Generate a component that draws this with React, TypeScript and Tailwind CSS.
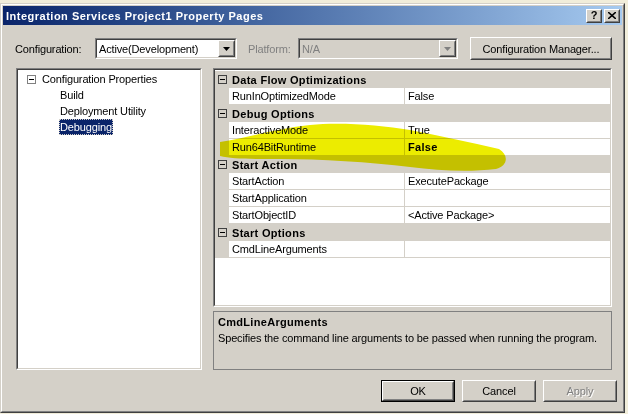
import React from "react";

const FONT = "font-['Liberation_Sans',Arial,sans-serif]";

function MinusBox({ tone = "#808080" }: { tone?: string }) {
  return (
    <span
      className="relative inline-block w-[9px] h-[9px] border bg-transparent shrink-0"
      style={{ borderColor: tone }}
    >
      <span className="absolute left-[1px] top-[3px] w-[5px] h-px bg-black" />
    </span>
  );
}

function Raised({ children, className = "", disabled = false }: { children?: React.ReactNode; className?: string; disabled?: boolean }) {
  return (
    <div className={`border border-t-white border-l-white border-b-[#404040] border-r-[#404040] bg-[#d4d0c8] ${className}`}>
      <div className={`w-full h-full border border-t-[#d4d0c8] border-l-[#d4d0c8] border-b-[#808080] border-r-[#808080] flex items-center justify-center ${disabled ? "text-[#808080] [text-shadow:1px_1px_0_#fff]" : "text-black"}`}>
        {children}
      </div>
    </div>
  );
}

function Sunken({ children, className = "", inner = "bg-white" }: { children?: React.ReactNode; className?: string; inner?: string }) {
  return (
    <div className={`border border-t-[#808080] border-l-[#808080] border-b-white border-r-white ${className}`}>
      <div className={`w-full h-full border border-t-[#404040] border-l-[#404040] border-b-[#d4d0c8] border-r-[#d4d0c8] ${inner} overflow-hidden`}>
        {children}
      </div>
    </div>
  );
}

function Arrow({ color = "#000" }: { color?: string }) {
  return (
    <svg width="7" height="4" viewBox="0 0 7 4">
      <path d="M0 0H7L3.5 4Z" fill={color} />
    </svg>
  );
}

function Combo({ value, width, disabled = false }: { value: string; width: string; disabled?: boolean }) {
  return (
    <Sunken className={`${width} h-[21px]`} inner={disabled ? "bg-[#d4d0c8]" : "bg-white"}>
      <div className="flex h-full">
        <div className={`flex-1 flex items-center pl-[2px] ${disabled ? "text-[#808080]" : "text-black"}`}>{value}</div>
        <Raised className="w-[17px] h-full">
          <Arrow color={disabled ? "#808080" : "#000"} />
        </Raised>
      </div>
    </Sunken>
  );
}

function Category({ name }: { name: string }) {
  return (
    <div className="flex h-[17px] items-center bg-[#d4d0c8]">
      <div className="w-[14px] flex justify-center">
        <MinusBox tone="#404040" />
      </div>
      <div className="pl-[3px] font-bold tracking-[0.3px]">{name}</div>
    </div>
  );
}

function Prop({ name, value, bold = false }: { name: string; value: string; bold?: boolean }) {
  return (
    <div className="flex h-[17px]">
      <div className="w-[14px] bg-[#d4d0c8]" />
      <div className="w-[176px] bg-white border-b border-r border-[#d4d0c8] flex items-center pl-[3px]">{name}</div>
      <div className={`flex-1 bg-white border-b border-[#d4d0c8] flex items-center pl-[3px] ${bold ? "font-bold tracking-[0.3px]" : ""}`}>{value}</div>
    </div>
  );
}

export default function App() {
  return (
    <div className={`relative w-[628px] h-[414px] bg-[#f1edda] overflow-hidden pt-[3px] text-[11px] leading-[14px] tracking-[-0.15px] text-black ${FONT}`}>
      {/* window */}
      <div className="w-[625px] h-[410px] border border-t-[#d4d0c8] border-l-[#d4d0c8] border-b-[#404040] border-r-[#404040]">
        <div className="w-full h-full border border-t-white border-l-white border-b-[#808080] border-r-[#808080] bg-[#d4d0c8] p-[1px] flex flex-col">
          {/* title bar */}
          <div className="h-[19px] bg-linear-to-r from-[#0a246a] to-[#a6caf0] flex items-center pl-[3px] pr-[2px]">
            <div className="flex-1 text-white font-bold text-[11px] tracking-[0.5px]">Integration Services Project1 Property Pages</div>
            <Raised className="w-[16px] h-[14px]">
              <span className="font-bold text-[11px] leading-none">?</span>
            </Raised>
            <Raised className="w-[16px] h-[14px] ml-[2px]">
              <svg width="8" height="7" viewBox="0 0 8 7">
                <path d="M0 0L8 7M8 0L0 7" stroke="#000" strokeWidth="1.6" />
              </svg>
            </Raised>
          </div>

          {/* body */}
          <div className="flex-1 flex flex-col pl-[13px] pr-[10px]">
            {/* config row */}
            <div className="mt-[12px] h-[23px] flex items-center ml-[-1px]">
              <div className="w-[80px]">Configuration:</div>
              <Combo value="Active(Development)" width="w-[142px]" />
              <div className="ml-[11px] w-[50px] text-[#808080]">Platform:</div>
              <Combo value="N/A" width="w-[160px]" disabled />
              <Raised className="ml-[12px] w-[142px] h-[23px]">Configuration Manager...</Raised>
            </div>

            {/* main */}
            <div className="mt-[8px] flex">
              <Sunken className="w-[186px] h-[302px]">
                <div className="pt-[1px]">
                  <div className="h-[16px] flex items-center pl-[9px]">
                    <MinusBox />
                    <span className="ml-[6px]">Configuration Properties</span>
                  </div>
                  <div className="h-[16px] flex items-center pl-[42px]">Build</div>
                  <div className="h-[16px] flex items-center pl-[42px]">Deployment Utility</div>
                  <div className="h-[16px] flex items-center pl-[41px]">
                    <span className="bg-[#0a246a] text-white px-[1px] h-[16px] flex items-center outline-1 outline-dotted outline-[#d4d0c8] outline-offset-[-1px]">Debugging</span>
                  </div>
                </div>
              </Sunken>

              <div className="ml-[11px] w-[399px] flex flex-col">
                <Sunken className="h-[239px]">
                  <div className="pt-[1px] bg-white h-full">
                    <Category name="Data Flow Optimizations" />
                    <Prop name="RunInOptimizedMode" value="False" />
                    <Category name="Debug Options" />
                    <Prop name="InteractiveMode" value="True" />
                    <Prop name="Run64BitRuntime" value="False" bold />
                    <Category name="Start Action" />
                    <Prop name="StartAction" value="ExecutePackage" />
                    <Prop name="StartApplication" value="" />
                    <Prop name="StartObjectID" value="<Active Package>" />
                    <Category name="Start Options" />
                    <Prop name="CmdLineArguments" value="" />
                  </div>
                </Sunken>
                <div className="mt-[4px] h-[59px] border border-[#808080] px-[4px] pt-[3px]">
                  <div className="font-bold tracking-[0.3px]">CmdLineArguments</div>
                  <div className="mt-[2px] whitespace-nowrap">Specifies the command line arguments to be passed when running the program.</div>
                </div>
              </div>
            </div>

            {/* buttons */}
            <div className="mt-[10px] flex justify-end gap-[7px] mr-[-5px]">
              <div className="border border-black">
                <Raised className="w-[72px] h-[20px]">OK</Raised>
              </div>
              <Raised className="w-[74px] h-[22px]">Cancel</Raised>
              <Raised className="w-[74px] h-[22px]" disabled>Apply</Raised>
            </div>
          </div>
        </div>
      </div>

      {/* highlighter marking over the grid */}
      <svg className="absolute left-0 top-0 pointer-events-none mix-blend-multiply" width="628" height="414" viewBox="0 0 628 414">
        <path
          d="M220,142 C250,137 280,128 310,125 C340,122 380,125 410,130 C440,136 470,142 499,149 C509,155 508,166 496,169 C470,172 440,171 410,167 C370,162 320,159 280,159 C250,159 232,159 220,156 Z"
          fill="#ecec00"
        />
      </svg>
    </div>
  );
}
